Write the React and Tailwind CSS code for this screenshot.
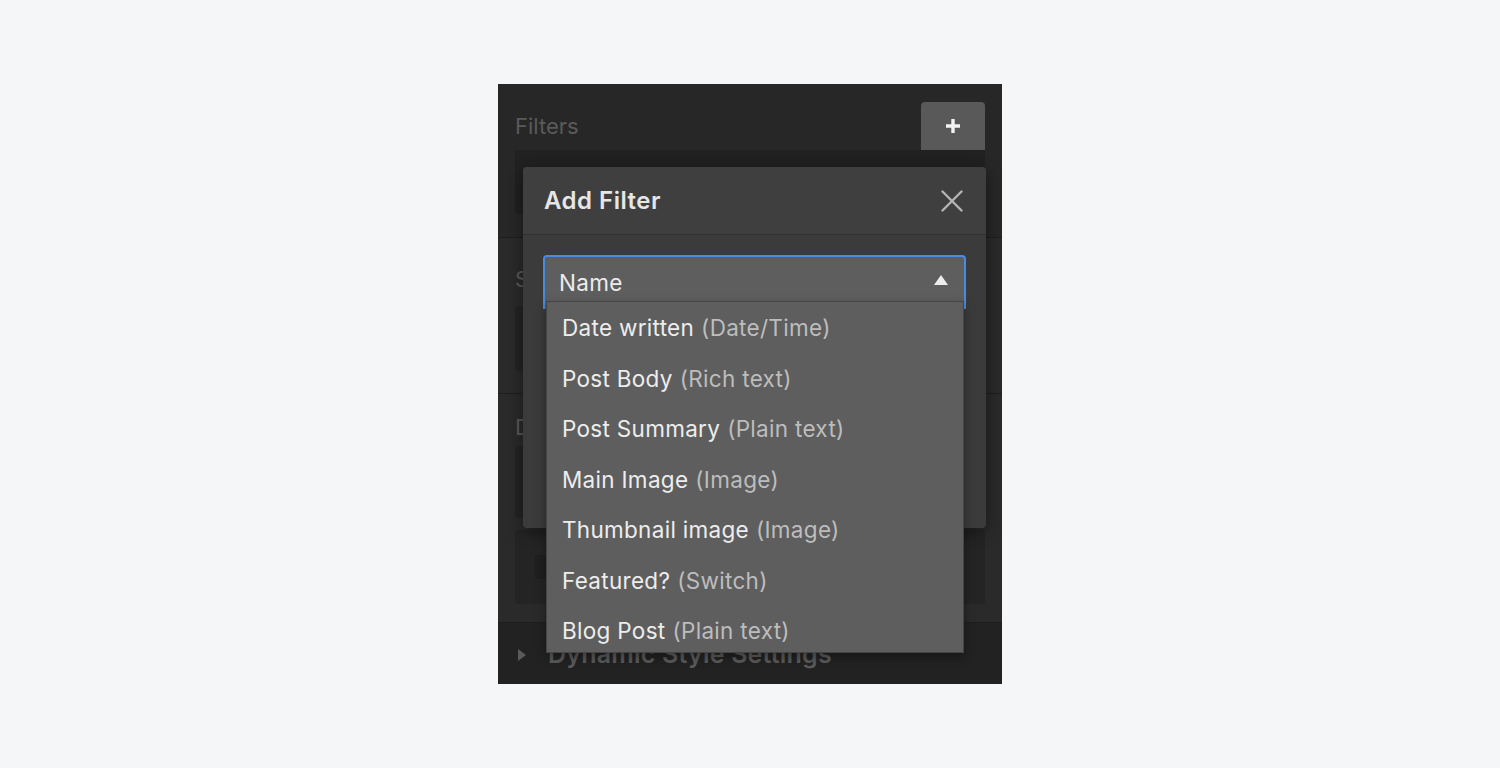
import React from 'react';

const fields = [
  { name: 'Date written', type: 'Date/Time' },
  { name: 'Post Body', type: 'Rich text' },
  { name: 'Post Summary', type: 'Plain text' },
  { name: 'Main Image', type: 'Image' },
  { name: 'Thumbnail image', type: 'Image' },
  { name: 'Featured?', type: 'Switch' },
  { name: 'Blog Post', type: 'Plain text' },
];

function AddFilterModal() {
  return (
    <div className="absolute left-[25px] top-[83px] w-[463px] h-[361px] rounded-[4px] bg-[#3b3b3b] shadow-[0_4px_16px_rgba(0,0,0,0.45)] z-10">
      <div className="h-[68px] flex items-center justify-between pl-[21px] pr-[23px] bg-[#3f3f3f] rounded-t-[4px] border-b border-[#313131]">
        <span className="text-[24px] font-semibold text-[#e6e6e6] tracking-[0.5px]">Add Filter</span>
        <svg width="22" height="22" viewBox="0 0 22 22" className="text-[#b4b4b4]">
          <path d="M1.5 1.5 L20.5 20.5 M20.5 1.5 L1.5 20.5" stroke="currentColor" strokeWidth="2.4" strokeLinecap="round" />
        </svg>
      </div>
      <div className="px-[20px] pt-[20px]">
        <div className="relative">
          <div className="h-[54px] rounded-t-[4px] border-2 border-b-0 border-[#4a8ae0] bg-[#5e5e5e] flex items-center justify-between pl-[14px] pr-[15px]">
            <span className="text-[22.5px] text-[#ececec] tracking-[0.3px]">Name</span>
            <svg width="16" height="12" viewBox="0 0 16 12" className="mt-[-6px]">
              <path d="M8 1 L15 11 L1 11 Z" fill="#ededed" />
            </svg>
          </div>
          <ul className="absolute left-[3px] top-[46px] w-[418px] h-[352px] overflow-hidden bg-[#5e5e5e] border border-[#454545] shadow-[0_4px_10px_rgba(0,0,0,0.35)]">
            {fields.map((f) => (
              <li key={f.name} className="h-[50.5px] flex items-center pl-[15px] pt-[2px] text-[22.5px] tracking-[0.3px] whitespace-nowrap">
                <span className="text-[#ededed]">{f.name}</span>
                <span className="text-[#bdbdbd] ml-[7px]">({f.type})</span>
              </li>
            ))}
          </ul>
        </div>
      </div>
    </div>
  );
}

export default function App() {
  return (
    <div className="min-h-screen w-full bg-[#f5f6f8] flex items-start justify-center pt-[84px] font-['Inter','Noto_Sans',sans-serif]">
      <div className="relative w-[504px] h-[600px] bg-[#272727] overflow-hidden">
        {/* Filters section */}
        <div className="px-[17px] pt-[18px] pb-[23px] border-b border-[#1e1e1e]">
          <div className="flex items-end justify-between">
            <span className="text-[22px] text-[#5a5a5a] mb-[7px]">Filters</span>
            <div className="w-[64px] h-[48px] rounded-t-[4px] bg-[#595959] flex items-center justify-center">
              <svg width="18" height="18" viewBox="0 0 18 18">
                <path d="M9 2 V16 M2 9 H16" stroke="#f2f2f2" strokeWidth="3.4" />
              </svg>
            </div>
          </div>
          <div className="h-[64px] bg-[#212121] rounded-b-[4px]" />
        </div>

        {/* Sort section */}
        <div className="px-[17px] pt-[30px] pb-[22px] bg-[#2a2a2a] border-b border-[#1e1e1e]">
          <div className="text-[22px] text-[#5a5a5a] leading-none h-[38px]">Sort Order</div>
          <div className="h-[65px] bg-[#242424] rounded-[4px]" />
        </div>

        {/* Dynamic section */}
        <div className="px-[17px] pt-[22px] pb-[18px] bg-[#2a2a2a] border-b border-[#1e1e1e]">
          <div className="text-[22px] text-[#5a5a5a] leading-none h-[30px]">Dynamic Conditional Visibility</div>
          <div className="h-[72px] bg-[#242424] rounded-[4px] mb-[12px]" />
          <div className="h-[74px] bg-[#242424] rounded-[4px] flex items-center pl-[20px]">
            <div className="w-[160px] h-[24px] bg-[#1f1f1f] rounded-[3px]" />
          </div>
        </div>

        {/* Dynamic Style Settings */}
        <div className="h-[62px] bg-[#222222] flex items-center pl-[19px] gap-[21px] pt-[2px]">
          <svg width="10" height="14" viewBox="0 0 10 14">
            <path d="M1 1 L9 7 L1 13 Z" fill="#5a5a5a" />
          </svg>
          <span className="text-[25px] font-semibold text-[#5a5a5a] tracking-[0.2px]">Dynamic Style Settings</span>
        </div>

        <AddFilterModal />
      </div>
    </div>
  );
}
